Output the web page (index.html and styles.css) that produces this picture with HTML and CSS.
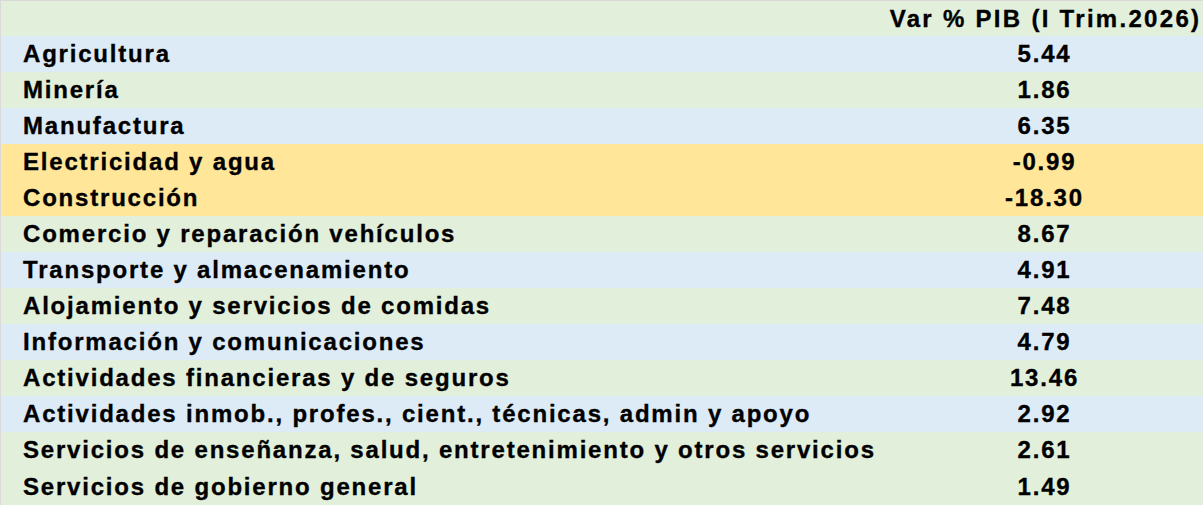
FILE: index.html
```html
<!DOCTYPE html>
<html lang="es">
<head>
<meta charset="utf-8">
<title>Var % PIB</title>
<link rel="stylesheet" href="styles.css">
</head>
<body>
<div class="table">
  <div class="row head"><div class="label"></div><div class="val">Var % PIB (I Trim.2026)</div></div>
  <div class="row blue"><div class="label">Agricultura</div><div class="val">5.44</div></div>
  <div class="row green"><div class="label">Minería</div><div class="val">1.86</div></div>
  <div class="row blue"><div class="label">Manufactura</div><div class="val">6.35</div></div>
  <div class="row yellow"><div class="label">Electricidad y agua</div><div class="val">-0.99</div></div>
  <div class="row yellow"><div class="label">Construcción</div><div class="val">-18.30</div></div>
  <div class="row green"><div class="label">Comercio y reparación vehículos</div><div class="val">8.67</div></div>
  <div class="row blue"><div class="label">Transporte y almacenamiento</div><div class="val">4.91</div></div>
  <div class="row green"><div class="label">Alojamiento y servicios de comidas</div><div class="val">7.48</div></div>
  <div class="row blue"><div class="label">Información y comunicaciones</div><div class="val">4.79</div></div>
  <div class="row green"><div class="label">Actividades financieras y de seguros</div><div class="val">13.46</div></div>
  <div class="row blue"><div class="label">Actividades inmob., profes., cient., técnicas, admin y apoyo</div><div class="val">2.92</div></div>
  <div class="row green"><div class="label">Servicios de enseñanza, salud, entretenimiento y otros servicios</div><div class="val">2.61</div></div>
  <div class="row green last"><div class="label">Servicios de gobierno general</div><div class="val">1.49</div></div>
</div>
</body>
</html>
```
FILE: styles.css
```css
html, body {
  margin: 0;
  padding: 0;
  background: #e2efda;
}
.table {
  width: 1203px;
  height: 505px;
  box-sizing: border-box;
  border-top: 1px solid #d9d9d9;
  border-left: 1px solid #d9d9d9;
  display: flex;
  flex-direction: column;
  font-family: "Liberation Sans", Arial, sans-serif;
  font-weight: bold;
  font-size: 24px;
  letter-spacing: 1.8px;
  color: #000;
  -webkit-text-stroke: 0.35px #000;
}
.row {
  display: grid;
  grid-template-columns: 885px 1fr;
  align-items: center;
  height: 36px;
  flex: none;
}
.row.head { height: 35px; background: #e2efda; letter-spacing: 2.3px; }
.row.head .val { padding-left: 2px; }
.row.last { flex: 1; }
.blue { background: #ddebf7; }
.green { background: #e2efda; }
.yellow { background: #ffe699; }
.label {
  padding-left: 22px;
  white-space: nowrap;
}
.val {
  text-align: center;
  white-space: nowrap;
}
```
